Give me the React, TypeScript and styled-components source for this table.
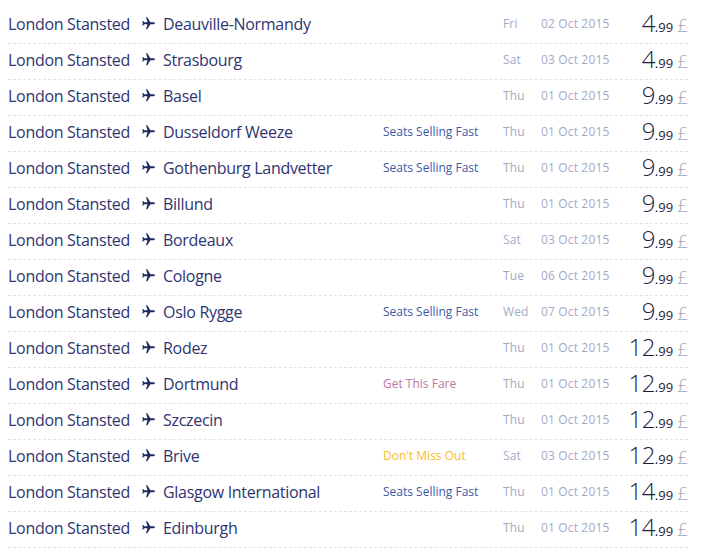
import React from "react";
import styled, { createGlobalStyle } from "styled-components";

type Tag = "fast" | "fare" | "miss" | null;

interface Flight {
    to: string;
    tag: Tag;
    day: string;
    date: string;
    whole: string;
}

const FLIGHTS: Flight[] = [
    { to: "Deauville-Normandy", tag: null, day: "Fri", date: "02 Oct 2015", whole: "4" },
    { to: "Strasbourg", tag: null, day: "Sat", date: "03 Oct 2015", whole: "4" },
    { to: "Basel", tag: null, day: "Thu", date: "01 Oct 2015", whole: "9" },
    { to: "Dusseldorf Weeze", tag: "fast", day: "Thu", date: "01 Oct 2015", whole: "9" },
    { to: "Gothenburg Landvetter", tag: "fast", day: "Thu", date: "01 Oct 2015", whole: "9" },
    { to: "Billund", tag: null, day: "Thu", date: "01 Oct 2015", whole: "9" },
    { to: "Bordeaux", tag: null, day: "Sat", date: "03 Oct 2015", whole: "9" },
    { to: "Cologne", tag: null, day: "Tue", date: "06 Oct 2015", whole: "9" },
    { to: "Oslo Rygge", tag: "fast", day: "Wed", date: "07 Oct 2015", whole: "9" },
    { to: "Rodez", tag: null, day: "Thu", date: "01 Oct 2015", whole: "12" },
    { to: "Dortmund", tag: "fare", day: "Thu", date: "01 Oct 2015", whole: "12" },
    { to: "Szczecin", tag: null, day: "Thu", date: "01 Oct 2015", whole: "12" },
    { to: "Brive", tag: "miss", day: "Sat", date: "03 Oct 2015", whole: "12" },
    { to: "Glasgow International", tag: "fast", day: "Thu", date: "01 Oct 2015", whole: "14" },
    { to: "Edinburgh", tag: null, day: "Thu", date: "01 Oct 2015", whole: "14" },
];

const TAG_TEXT: Record<string, string> = {
    fast: "Seats Selling Fast",
    fare: "Get This Fare",
    miss: "Don't Miss Out",
};

const TAG_COLOR: Record<string, string> = {
    fast: "#3d5aa6",
    fare: "#c474a6",
    miss: "#f7bb2a",
};

const PlaneIcon = () => (
    <svg width="15" height="15" viewBox="0 0 24 24">
        <path
            transform="rotate(90 12 12)"
            fill="#1f2a5e"
            d="M21 16v-2l-8-5V3.5c0-.83-.67-1.5-1.5-1.5S10 2.67 10 3.5V9l-8 5v2l8-2.5V19l-2 1.5V22l3.5-1 3.5 1v-1.5L13 19v-5.5l8 2.5z"
        />
    </svg>
);

const App: React.FC = () => {
    return (
        <>
            <GlobalStyle />
            <List>
                {FLIGHTS.map((f, index) => (
                    <Row key={index}>
                        <Place>London Stansted</Place>
                        <Plane>
                            <PlaneIcon />
                        </Plane>
                        <Place>{f.to}</Place>
                        <Badge color={f.tag ? TAG_COLOR[f.tag] : "transparent"}>
                            {f.tag ? TAG_TEXT[f.tag] : ""}
                        </Badge>
                        <Muted>{f.day}</Muted>
                        <Muted>{f.date}</Muted>
                        <Price>
                            <Whole>{f.whole}</Whole>
                            <Cents>.99</Cents>
                            <Pound>£</Pound>
                        </Price>
                    </Row>
                ))}
            </List>
        </>
    );
};

const GlobalStyle = createGlobalStyle`
    body {
        margin: 8px;
        background: #ffffff;
        font-family: "Open Sans", "Noto Sans", sans-serif;
    }
`;

const List = styled.div`
    width: 680px;
    display: flex;
    flex-direction: column;
`;

const Row = styled.div`
    box-sizing: border-box;
    display: grid;
    grid-template-columns: 131px 24px 220px 120px 38px 1fr auto;
    grid-template-rows: 1fr;
    align-items: center;
    height: 36px;
    padding-bottom: 4px;
    border-bottom: 1px dashed #e2e2e6;
    line-height: 20px;
`;

const Place = styled.span`
    font-size: 16px;
    color: #2f3470;
    white-space: nowrap;
    letter-spacing: -0.3px;
`;

const Plane = styled.span`
    display: flex;
    align-items: center;
    padding-left: 2px;
`;

const Badge = styled.span<{ color: string }>`
    font-size: 12px;
    color: ${({ color }) => color};
    white-space: nowrap;
`;

const Muted = styled.span`
    font-size: 12px;
    color: #a3aac6;
    white-space: nowrap;
    letter-spacing: 0.15px;
`;

const Price = styled.span`
    display: flex;
    align-items: baseline;
    white-space: nowrap;
    padding-top: 3px;
`;

const Whole = styled.span`
    font-size: 24px;
    font-weight: 300;
    color: #1c2140;
    letter-spacing: -0.5px;
`;

const Cents = styled.span`
    font-size: 13px;
    color: #1c2140;
`;

const Pound = styled.span`
    font-size: 19px;
    font-weight: 300;
    color: #a3a7ba;
    margin-left: 4px;
`;

export default App;
